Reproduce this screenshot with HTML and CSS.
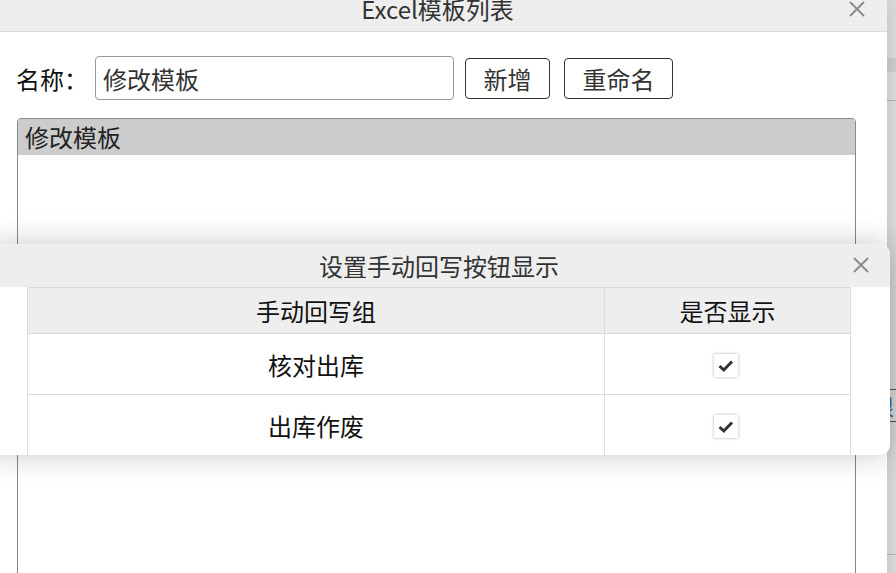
FILE: index.html
```html
<!DOCTYPE html>
<html>
  <head>
    <meta charset="utf-8" />
    <title>Excel模板列表</title>
    <link rel="stylesheet" href="styles.css">
  </head>
  <body>
    <div class="backdrop">
      <div class="bd-band"></div>
      <div class="bd-line bd-l1"></div>
      <div class="bd-cell">根</div>
      <div class="bd-line bd-l3"></div>
    </div>

    <div class="dialog dialog-list">
      <div class="dialog-header">
        <span class="dialog-title">Excel模板列表</span>
        <span class="dialog-close">
          <svg width="18" height="18" viewBox="0 0 18 18"><path d="M2 2L16 16M16 2L2 16" stroke="#8a8a8a" stroke-width="1.8" fill="none"/></svg>
        </span>
      </div>
      <div class="dialog-body">
        <div class="name-row">
          <label class="name-label" for="tplName">名称：</label>
          <input type="text" id="tplName" class="name-input" value="修改模板" />
          <button class="btn btn-add">新增</button>
          <button class="btn btn-rename">重命名</button>
        </div>
        <div class="tpl-list">
          <div class="tpl-item selected">修改模板</div>
        </div>
      </div>
    </div>

    <div class="dialog dialog-writeback">
      <div class="dialog-header">
        <span class="dialog-title">设置手动回写按钮显示</span>
        <span class="dialog-close">
          <svg width="18" height="18" viewBox="0 0 18 18"><path d="M2 2L16 16M16 2L2 16" stroke="#8a8a8a" stroke-width="1.8" fill="none"/></svg>
        </span>
      </div>
      <table class="wb-table">
        <thead>
          <tr>
            <th class="col-group">手动回写组</th>
            <th class="col-show">是否显示</th>
          </tr>
        </thead>
        <tbody>
          <tr>
            <td>核对出库</td>
            <td><span class="check"><svg width="16" height="14" viewBox="0 0 16 14"><path d="M1.5 7L5.8 11L14 2.5" stroke="#333" stroke-width="3" fill="none"/></svg></span></td>
          </tr>
          <tr>
            <td>出库作废</td>
            <td><span class="check"><svg width="16" height="14" viewBox="0 0 16 14"><path d="M1.5 7L5.8 11L14 2.5" stroke="#333" stroke-width="3" fill="none"/></svg></span></td>
          </tr>
        </tbody>
      </table>
    </div>
  </body>
</html>
```

FILE: styles.css
```css
html,
body {
  margin: 0;
  height: 100%;
}
body {
  position: relative;
  overflow: hidden;
  background-color: #e6e6e6;
  font-family: "Noto Sans CJK SC", "Microsoft YaHei", sans-serif;
  font-size: 24px;
  color: #222;
}
.backdrop {
  position: absolute;
  top: 0;
  right: 0;
  width: 30px;
  height: 100%;
}
.bd-band {
  margin-top: 58px;
  height: 14px;
  background-color: #d6d6d6;
}
.bd-line {
  border-top: 1px solid #bbb;
}
.bd-l1 {
  margin-top: 28px;
}
.bd-cell {
  margin-top: 288px;
  height: 31px;
  line-height: 31px;
  padding-left: 6px;
  border-top: 1px solid #555;
  border-bottom: 1px solid #555;
  color: #3a6fb0;
  font-size: 22px;
  overflow: hidden;
}
.bd-l3 {
  margin-top: 132px;
}
.dialog {
  position: absolute;
  background-color: #fff;
  box-shadow: 0 0 30px rgba(0, 0, 0, 0.22);
  overflow: hidden;
}
.dialog-header {
  position: relative;
  height: 43px;
  line-height: 43px;
  background-color: #eeeeee;
  border-bottom: 1px solid #dcdcdc;
  text-align: center;
  color: #333;
}
.dialog-close {
  position: absolute;
  top: 12px;
  right: 20px;
  height: 18px;
  line-height: 0;
}
.dialog-list {
  top: -11px;
  left: 0;
  width: 887px;
  height: 620px;
}
.dialog-list .dialog-header {
  height: 42px;
  line-height: 40px;
  padding-right: 12px;
}
.dialog-list .dialog-close {
  top: 11px;
  right: 21px;
}
.dialog-body {
  padding: 24px 31px 0 17px;
}
.name-row {
  display: flex;
  align-items: center;
}
.name-label {
  width: 79px;
  color: #111;
  margin-left: -1px;
}
.name-input {
  width: 359px;
  height: 44px;
  box-sizing: border-box;
  padding: 0 7px;
  border: 1px solid #999;
  border-radius: 4px;
  font-family: inherit;
  font-size: 24px;
  color: #333;
  outline: none;
}
.btn {
  height: 41px;
  padding: 0;
  margin-left: 11px;
  background-color: #fff;
  border: 1px solid #333;
  border-radius: 4px;
  font-family: inherit;
  font-size: 24px;
  color: #333;
  cursor: pointer;
}
.btn-add {
  width: 85px;
}
.btn-rename {
  width: 109px;
  margin-left: 14px;
}
.tpl-list {
  margin-top: 18px;
  height: 500px;
  border: 1px solid #888;
  border-radius: 4px;
  overflow: hidden;
}
.tpl-item {
  height: 36px;
  line-height: 36px;
  padding-left: 7px;
}
.tpl-item.selected {
  background-color: #cccccc;
}
.dialog-writeback {
  top: 244px;
  left: -12px;
  width: 902px;
  border-radius: 10px;
}
.dialog-writeback .dialog-header {
  border-bottom: none;
}
.wb-table {
  margin: 0 39px;
  width: 824px;
  border-collapse: collapse;
}
.wb-table th,
.wb-table td {
  border: 1px solid #dcdcdc;
  text-align: center;
  font-weight: normal;
  color: #111;
  padding: 0;
}
.wb-table tr:last-child td {
  border-bottom: none;
}
.wb-table th {
  height: 45px;
  background-color: #eeeeee;
}
.wb-table td {
  height: 60px;
}
.col-group {
  width: 576px;
}
.check {
  display: inline-flex;
  align-items: center;
  justify-content: center;
  width: 24px;
  height: 23px;
  margin: -4px 4px 0 0;
  vertical-align: middle;
  background-color: #fff;
  box-shadow: 0 0 3px rgba(0, 0, 0, 0.3);
}
```
